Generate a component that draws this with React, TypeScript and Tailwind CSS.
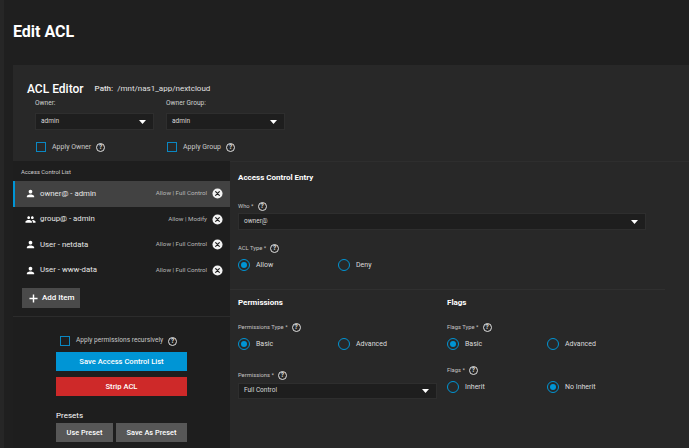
const Help = () => (
  <span className="inline-flex h-[9px] w-[9px] items-center justify-center rounded-full border border-[#e0e0e0] text-[6.5px] font-bold leading-none text-[#e0e0e0]">
    ?
  </span>
);

const Caret = () => (
  <svg width="7" height="4" viewBox="0 0 7 4">
    <polygon points="0,0 7,0 3.5,4" fill="#ffffff" />
  </svg>
);

const Checkbox = () => <span className="block h-[10px] w-[10px] border-[1.5px] border-[#0a87c2]" />;

const Select = ({ value, className }: { value: string; className: string }) => (
  <div
    className={`flex items-center justify-between border border-[#2e2e2e] bg-[#1e1e1e] pl-[5px] pr-[7px] ${className}`}
  >
    <span className="text-[6.5px] text-[#d8d8d8]">{value}</span>
    <Caret />
  </div>
);

const Radio = ({ label, checked }: { label: string; checked?: boolean }) => (
  <div className="flex w-[100px] items-center gap-[6px]">
    <span className="flex h-[12px] w-[12px] items-center justify-center rounded-full border-[1.5px] border-[#0095d5]">
      {checked && <span className="h-[6px] w-[6px] rounded-full bg-[#0095d5]" />}
    </span>
    <span className="text-[7px] text-[#dcdcdc]">{label}</span>
  </div>
);

const Label = ({ text }: { text: string }) => (
  <div className="flex h-[10px] items-center gap-[4px] text-[5.8px] leading-[10px] text-[#c4c4c4]">
    <span>{text}</span>
    <Help />
  </div>
);

const PersonIcon = () => (
  <svg width="11" height="11" viewBox="0 0 24 24" fill="#ffffff">
    <path d="M12 12c2.21 0 4-1.79 4-4s-1.790-4-4-4-4 1.79-4 4 1.79 4 4 4zm0 2c-2.67 0-8 1.34-8 4v2h16v-2c0-2.66-5.33-4-8-4z" />
  </svg>
);

const GroupIcon = () => (
  <svg width="11" height="11" viewBox="0 0 24 24" fill="#ffffff">
    <path d="M16 11c1.66 0 2.99-1.34 2.99-3S17.66 5 16 5c-1.66 0-3 1.34-3 3s1.34 3 3 3zm-8 0c1.66 0 2.99-1.34 2.99-3S9.66 5 8 5C6.34 5 5 6.34 5 8s1.34 3 3 3zm0 2c-2.33 0-7 1.17-7 3.5V19h14v-2.5c0-2.33-4.67-3.5-7-3.5zm8 0c-.29 0-.62.02-.97.05 1.16.84 1.97 1.97 1.97 3.45V19h6v-2.5c0-2.33-4.67-3.5-7-3.5z" />
  </svg>
);

const CloseIcon = () => (
  <svg width="11" height="11" viewBox="0 0 24 24">
    <circle cx="12" cy="12" r="11" fill="#f2f2f2" />
    <path d="M8 8l8 8M16 8l-8 8" stroke="#222" strokeWidth="2.6" strokeLinecap="round" />
  </svg>
);

const entries = [
  { name: "owner@ - admin", perm: "Allow | Full Control", group: false, selected: true },
  { name: "group@ - admin", perm: "Allow | Modify", group: true, selected: false },
  { name: "User - netdata", perm: "Allow | Full Control", group: false, selected: false },
  { name: "User - www-data", perm: "Allow | Full Control", group: false, selected: false },
];

export default function App() {
  return (
    <div className="flex h-[448px] w-full overflow-hidden bg-[#1f1f1f] font-['Roboto',sans-serif]">
      <div className="w-[4px] shrink-0 bg-[#262626]" />
      <div className="flex min-w-0 flex-1 flex-col pl-[9px]">
        <h1 className="mt-[22px] text-[16px] font-bold leading-[20px] text-white">Edit ACL</h1>
        <div className="mt-[7px] h-[2px] bg-[#2f2f2f]" />

        <div className="mt-[16px] flex flex-col bg-[#282828]">
          {/* top: owner fields */}
          <div className="pb-[9px] pt-[16px]">
            <div className="flex h-[16px] items-center pl-[14px]">
              <span className="text-[12px] font-medium leading-[16px] text-white">ACL Editor</span>
              <span className="ml-[11px] text-[8px] font-medium text-[#e0e0e0]">Path:</span>
              <span className="ml-[4px] text-[8px] text-[#e0e0e0]">/mnt/nas1_app/nextcloud</span>
            </div>
            <div className="mt-[1px] flex gap-[12px] pl-[22px]">
              {[
                { label: "Owner:", check: "Apply Owner" },
                { label: "Owner Group:", check: "Apply Group" },
              ].map((f) => (
                <div key={f.label} className="flex w-[119px] flex-col">
                  <span className="mb-[5px] h-[10px] text-[6.6px] leading-[10px] text-[#d0d0d0]">{f.label}</span>
                  <Select value="admin" className="h-[17px] w-[119px]" />
                  <div className="mt-[12px] flex h-[10px] items-center pl-[1px]">
                    <Checkbox />
                    <span className="ml-[6px] text-[7px] text-[#c8c8c8]">{f.check}</span>
                    <span className="ml-[5px] flex">
                      <Help />
                    </span>
                  </div>
                </div>
              ))}
            </div>
          </div>

          {/* lower: list + entry */}
          <div className="flex">
            <div className="flex w-[217px] shrink-0 flex-col bg-[#1e1e1e] pb-[40px]">
              <div className="border-b border-[#2c2c2c] pb-[8px]">
                <div className="mb-[4px] mt-[6px] h-[10px] pl-[8px] text-[5.8px] leading-[10px] text-[#cfcfcf]">
                  Access Control List
                </div>
                {entries.map((e) => (
                  <div
                    key={e.name}
                    className={`flex h-[25.5px] items-center border-l-2 pl-[10px] pr-[7px] ${
                      e.selected ? "border-[#0095d5] bg-[#424242]" : "border-transparent"
                    }`}
                  >
                    {e.group ? <GroupIcon /> : <PersonIcon />}
                    <span className="ml-[4px] text-[7.8px] text-[#e6e6e6]">{e.name}</span>
                    <span className="ml-auto text-[6.2px] text-[#b8b8b8]">{e.perm}</span>
                    <span className="ml-[5px] flex">
                      <CloseIcon />
                    </span>
                  </div>
                ))}
                <button className="ml-[9px] mt-[5px] flex h-[20px] w-[58px] items-center gap-[4px] whitespace-nowrap bg-[#4a4a4a] pl-[7px] text-[8px] font-medium text-white">
                  <svg width="9" height="9" viewBox="0 0 10 10">
                    <path d="M5 0.5v9M0.5 5h9" stroke="#fff" strokeWidth="1.6" />
                  </svg>
                  Add Item
                </button>
              </div>

              <div className="flex flex-col pl-[43px]">
                <div className="mt-[19px] flex h-[10px] items-center pl-[4px]">
                  <Checkbox />
                  <span className="ml-[6px] text-[6.6px] text-[#c8c8c8]">Apply permissions recursively</span>
                  <span className="ml-[5px] flex">
                    <Help />
                  </span>
                </div>
                <button className="mt-[6px] h-[19px] w-[131px] bg-[#0095d5] text-[7.6px] font-medium text-white">
                  Save Access Control List
                </button>
                <button className="mt-[6px] h-[19px] w-[131px] bg-[#ce2929] text-[7.6px] font-medium text-white">
                  Strip ACL
                </button>
                <span className="mt-[15px] h-[10px] text-[8px] leading-[10px] text-white">Presets</span>
                <div className="mt-[2px] flex gap-[3px]">
                  <button className="h-[19px] w-[57px] bg-[#575757] text-[7.4px] font-medium text-white">Use Preset</button>
                  <button className="h-[19px] w-[71px] bg-[#575757] text-[7.4px] font-medium text-white">
                    Save As Preset
                  </button>
                </div>
              </div>
            </div>

            <div className="flex flex-1 flex-col border-t border-[#2e2e2e]">
              <div className="flex flex-col pl-[8px]">
                <span className="mt-[10px] h-[12px] text-[8px] font-bold leading-[12px] text-white">
                  Access Control Entry
                </span>
                <div className="mb-[2px] mt-[17px]">
                  <Label text="Who *" />
                </div>
                <Select value="owner@" className="h-[17px] w-[408px]" />
                <div className="mt-[13px]">
                  <Label text="ACL Type *" />
                </div>
                <div className="mt-[6px] flex">
                  <Radio label="Allow" checked />
                  <Radio label="Deny" />
                </div>
              </div>
              <div className="mt-[18px] h-px w-[435px] bg-[#303030]" />
              <div className="flex pl-[8px]">
                <div className="flex w-[209px] flex-col">
                  <span className="mt-[7px] h-[12px] text-[8px] font-bold leading-[12px] text-white">Permissions</span>
                  <div className="mt-[13px]">
                    <Label text="Permissions Type *" />
                  </div>
                  <div className="mt-[6px] flex">
                    <Radio label="Basic" checked />
                    <Radio label="Advanced" />
                  </div>
                  <div className="mb-[3px] mt-[20px]">
                    <Label text="Permissions *" />
                  </div>
                  <Select value="Full Control" className="h-[16px] w-[199px]" />
                </div>
                <div className="flex flex-col">
                  <span className="mt-[7px] h-[12px] text-[8px] font-bold leading-[12px] text-white">Flags</span>
                  <div className="mt-[13px]">
                    <Label text="Flags Type *" />
                  </div>
                  <div className="mt-[6px] flex">
                    <Radio label="Basic" checked />
                    <Radio label="Advanced" />
                  </div>
                  <div className="mt-[15px]">
                    <Label text="Flags *" />
                  </div>
                  <div className="mt-[6px] flex">
                    <Radio label="Inherit" />
                    <Radio label="No Inherit" checked />
                  </div>
                </div>
              </div>
            </div>
          </div>
        </div>
      </div>
    </div>
  );
}
